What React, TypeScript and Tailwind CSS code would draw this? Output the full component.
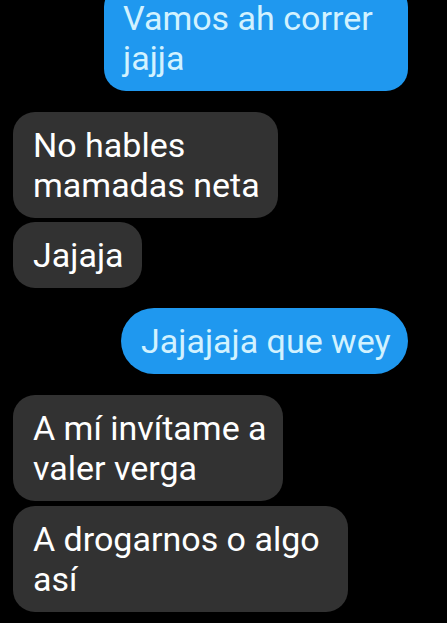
import * as React from "react";

type Msg = {
  text: string;
  mine: boolean;
  width: string;
  gap: string;
  pill?: boolean;
};

// chat thread, wrapped lines kept as in the screenshot
const messages: Msg[] = [
  { text: "Vamos ah correr\njajja", mine: true, width: "w-[304px]", gap: "-mt-[15px]" },
  { text: "No hables\nmamadas neta", mine: false, width: "w-[265px]", gap: "mt-[21px]" },
  { text: "Jajaja", mine: false, width: "w-[129px]", gap: "mt-[4px]" },
  { text: "Jajajaja que wey", mine: true, width: "w-[287px]", gap: "mt-[20px]", pill: true },
  { text: "A mí invítame a\nvaler verga", mine: false, width: "w-[270px]", gap: "mt-[21px]" },
  { text: "A drogarnos o algo\nasí", mine: false, width: "w-[335px]", gap: "mt-[5px]" },
];

function Bubble({ msg }: { msg: Msg }) {
  return (
    <div
      className={[
        msg.width,
        msg.gap,
        "whitespace-pre py-[13px] text-[34px] leading-[40px]",
        msg.mine
          ? "self-end bg-[#1f98ef] pl-[19px] text-[#d2f2ff]"
          : "self-start bg-[#323232] pl-5 text-white",
        msg.pill ? "rounded-full pl-[20px]" : "rounded-[22px]",
      ].join(" ")}
    >
      {msg.text}
    </div>
  );
}

export default function App() {
  return (
    <div
      className="flex h-[623px] w-[447px] flex-col overflow-hidden bg-black pl-[13px] pr-[39px]"
      style={{ fontFamily: "Roboto, 'Noto Sans', sans-serif" }}
    >
      {messages.map((m, i) => (
        <Bubble key={i} msg={m} />
      ))}
    </div>
  );
}
